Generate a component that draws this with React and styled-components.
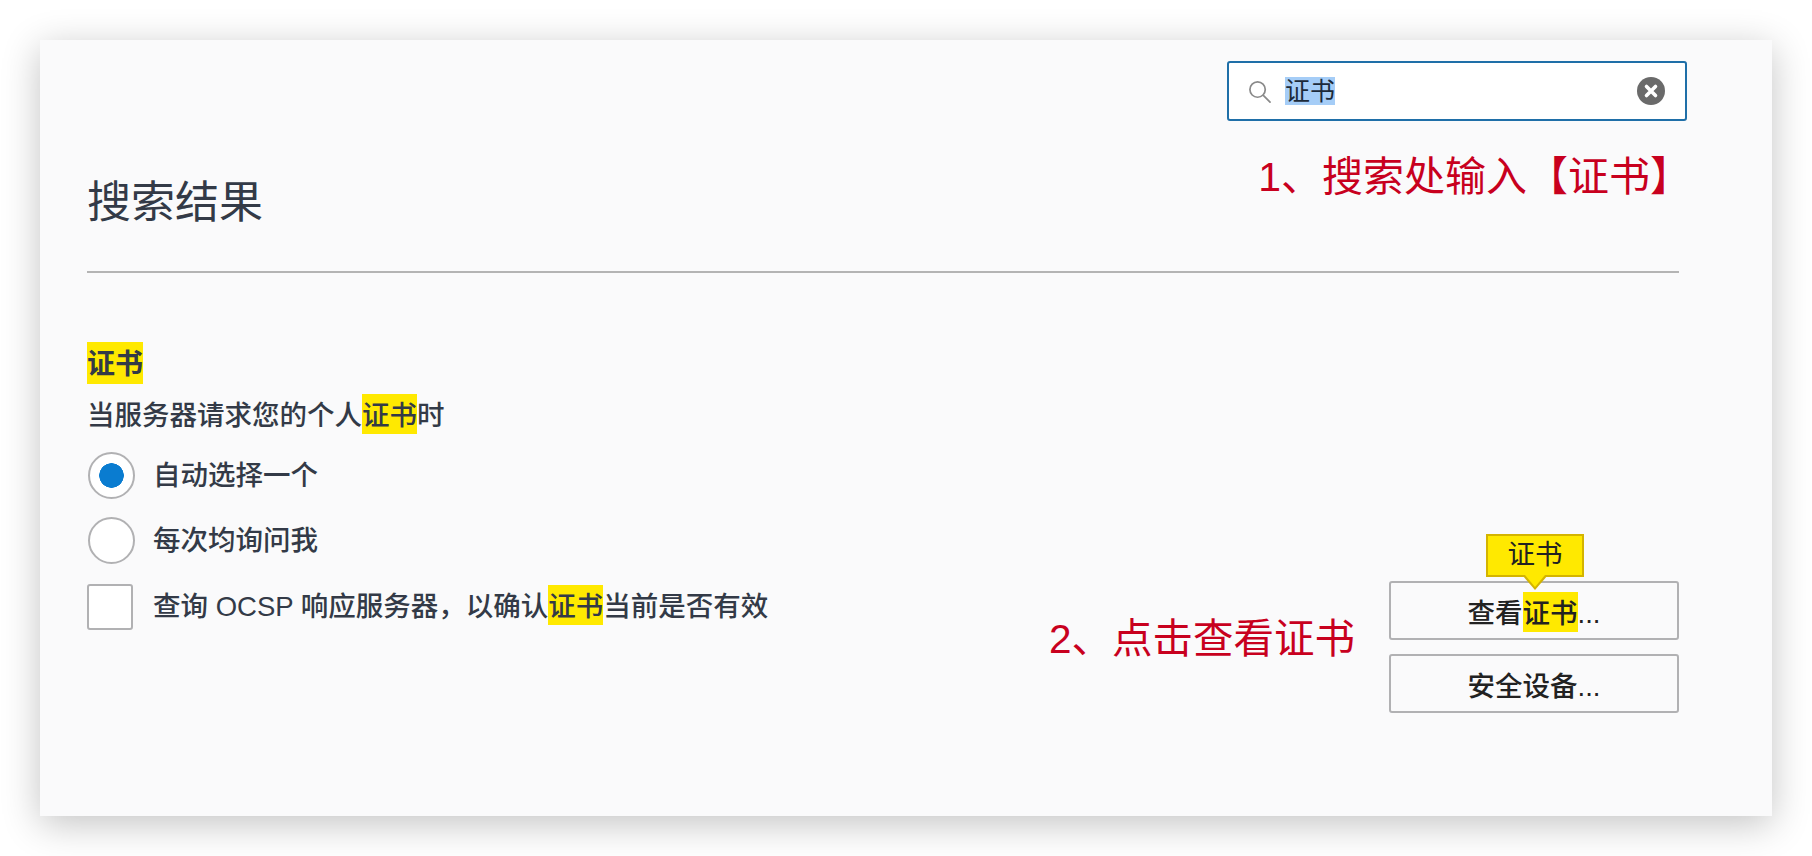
import styled, { createGlobalStyle } from 'styled-components';

const GlobalStyle = createGlobalStyle`
  html, body {
    margin: 0;
    padding: 0;
    background: #fff;
  }
  body {
    font-family: "Liberation Sans", "Noto Sans CJK SC", sans-serif;
    color: #333a47;
  }
`;

const SearchIcon = () => (
  <SearchSvg viewBox="0 0 24 24" fill="none" stroke="#8a8a8a" strokeWidth="1.8" strokeLinecap="round">
    <circle cx="10" cy="10" r="8" />
    <path d="M16 16l7 7" />
  </SearchSvg>
);

const ClearIcon = () => (
  <svg width="28" height="28" viewBox="0 0 28 28">
    <circle cx="14" cy="14" r="14" fill="#6a6a6a" />
    <path d="M9.5 9.5l9 9M18.5 9.5l-9 9" stroke="#fff" strokeWidth="3.6" strokeLinecap="round" />
  </svg>
);

export default function App() {
  return (
    <>
      <GlobalStyle />
      <Page>
        <Card>
          <SearchRow>
            <SearchBox>
              <SearchIcon />
              <SearchText>证书</SearchText>
              <ClearIcon />
            </SearchBox>
          </SearchRow>

          <HeaderRow>
            <Title>搜索结果</Title>
            <Annotation>1、搜索处输入【证书】</Annotation>
          </HeaderRow>
          <Divider />

          <SectionTitle><Mark tall>证书</Mark></SectionTitle>

          <Section>
            <Options>
              <Description>当服务器请求您的个人<Mark>证书</Mark>时</Description>
              <OptionRow>
                <Radio checked />
                <span>自动选择一个</span>
              </OptionRow>
              <OptionRow>
                <Radio />
                <span>每次均询问我</span>
              </OptionRow>
              <OptionRow>
                <Checkbox />
                <span>查询 OCSP 响应服务器，以确认<Mark>证书</Mark>当前是否有效</span>
              </OptionRow>
            </Options>

            <Actions>
              <ActionAnnotation>2、点击查看证书</ActionAnnotation>
              <Buttons>
                <Button>
                  <Tooltip>证书</Tooltip>
                  查看<Mark>证书</Mark>...
                </Button>
                <Button>安全设备...</Button>
              </Buttons>
            </Actions>
          </Section>
        </Card>
      </Page>
    </>
  );
}

const Page = styled.div`
  box-sizing: border-box;
  width: 1812px;
  height: 856px;
  padding: 40px;
  overflow: hidden;
`;

const Card = styled.div`
  box-sizing: border-box;
  width: 1732px;
  height: 776px;
  padding: 21px 93px 0 47px;
  background: #fafafb;
  box-shadow: 0 8px 36px rgba(0, 0, 0, 0.24);
`;

const SearchRow = styled.div`
  display: flex;
  justify-content: flex-end;
  margin-right: -8px;
`;

const SearchBox = styled.div`
  box-sizing: border-box;
  display: flex;
  align-items: center;
  width: 460px;
  height: 60px;
  padding: 0 20px 0 19px;
  background: #fff;
  border: 2px solid #1f6fa8;
  border-radius: 3px;
`;

const SearchSvg = styled.svg`
  width: 23px;
  height: 23px;
  margin-right: 14px;
`;

const SearchText = styled.span`
  flex: 1;
  font-size: 25px;
  line-height: 28px;
  color: #1c2a3a;

  &::first-line {
    background: #a5cdf7;
  }
`;

const HeaderRow = styled.div`
  display: flex;
  align-items: flex-start;
  justify-content: space-between;
  margin-top: 30px;
  height: 120px;
`;

const Title = styled.h1`
  margin: 22px 0 0;
  font-size: 44px;
  line-height: 60px;
  font-weight: 400;
  color: #333a47;
`;

const Annotation = styled.div`
  margin: -2px -12px 0 0;
  font-size: 41px;
  line-height: 56px;
  color: #c8001e;
`;

const Divider = styled.hr`
  margin: 0;
  border: 0;
  height: 2px;
  background: #b4b4b4;
`;

const SectionTitle = styled.h2`
  margin: 71px 0 0;
  font-size: 28px;
  line-height: 42px;
  font-weight: 700;
  color: #333a47;
`;

const Section = styled.div`
  display: flex;
  justify-content: space-between;
  align-items: flex-start;
`;

const Options = styled.div`
  display: flex;
  flex-direction: column;
`;

const Description = styled.div`
  margin: 10px 0 16px;
  font-size: 27.5px;
  font-weight: 500;
  line-height: 40px;
`;

const Mark = styled.span`
  padding: ${(props) => (props.tall ? '7px 0 4px' : '6px 0 3px')};
  background: #ffe900;
`;

const OptionRow = styled.label`
  display: flex;
  align-items: center;
  gap: 18px;
  height: 47px;
  margin-bottom: 18px;
  font-size: 27.5px;
  font-weight: 500;
  line-height: 40px;
  white-space: nowrap;

  &:last-child {
    margin-top: 1px;
  }
`;

const Radio = styled.span`
  box-sizing: border-box;
  flex: none;
  width: 47px;
  height: 47px;
  margin-left: 1px;
  border-radius: 50%;
  background: ${(props) => (props.checked ? 'radial-gradient(circle, #0a7cd0 0 12px, #fff 12.5px)' : '#fff')};
  border: 2px solid #b1b1b3;
`;

const Checkbox = styled.span`
  box-sizing: border-box;
  flex: none;
  width: 46px;
  height: 46px;
  margin-right: 2px;
  background: #fff;
  border: 2px solid #b1b1b3;
  border-radius: 3px;
`;

const Actions = styled.div`
  display: flex;
  align-items: flex-start;
  margin-top: 195px;
`;

const ActionAnnotation = styled.div`
  margin: 30px 34px 0 0;
  font-size: 40.5px;
  line-height: 56px;
  color: #c8001e;
  white-space: nowrap;
`;

const Buttons = styled.div`
  display: flex;
  flex-direction: column;
  gap: 14px;
`;

const Button = styled.button`
  position: relative;
  box-sizing: border-box;
  width: 290px;
  height: 59px;
  padding: 0;
  background: #fafafb;
  border: 2px solid #b1b1b3;
  border-radius: 3px;
  font-family: inherit;
  font-size: 27.5px;
  font-weight: 500;
  color: #222;
`;

const Tooltip = styled.span`
  position: absolute;
  left: 95px;
  top: -49px;
  box-sizing: border-box;
  width: 98px;
  height: 43px;
  line-height: 38px;
  font-size: 27.5px;
  font-weight: 400;
  text-align: center;
  background: #ffe900;
  border: 2px solid #d4b400;
  color: #222;

  &::before,
  &::after {
    content: '';
    position: absolute;
    clip-path: polygon(0 0, 100% 0, 50% 100%);
  }

  &::before {
    left: 34px;
    top: 39px;
    width: 26px;
    height: 15px;
    background: #d4b400;
  }

  &::after {
    left: 37px;
    top: 39px;
    width: 20px;
    height: 12px;
    background: #ffe900;
  }
`;
